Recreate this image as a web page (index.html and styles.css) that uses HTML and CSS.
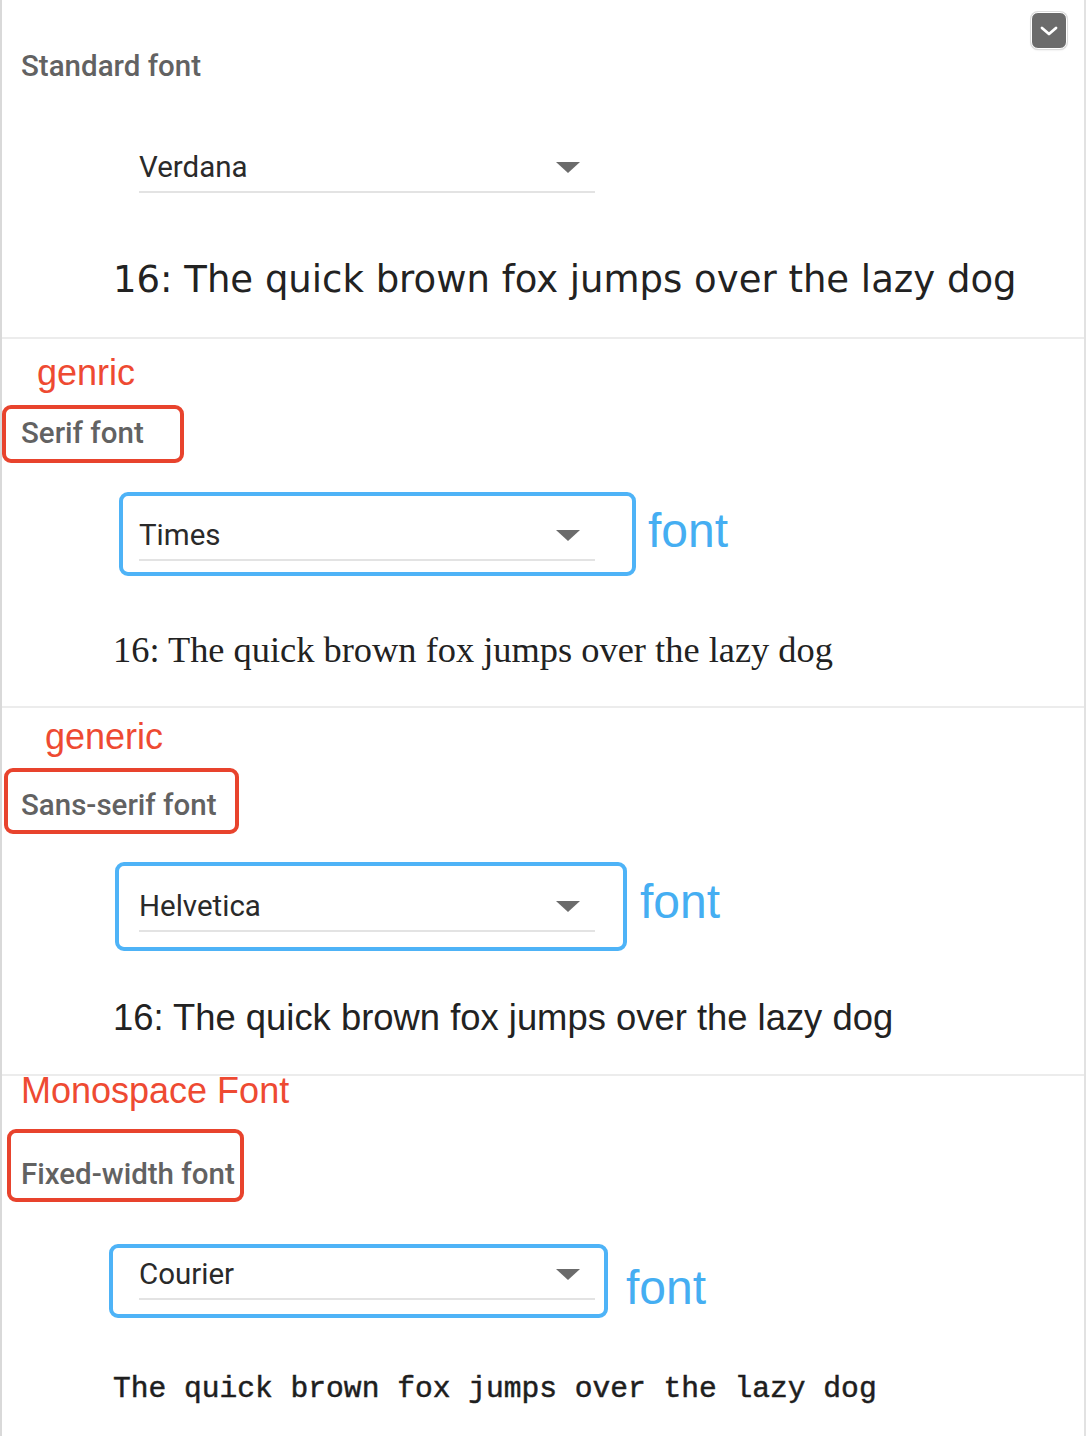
FILE: index.html
```html
<!DOCTYPE html>
<html lang="en">
<head>
<meta charset="utf-8">
<title>Font settings</title>
<link rel="stylesheet" href="styles.css">
</head>
<body>
<div class="page">
  <button class="collapse" type="button" aria-label="Collapse">
    <svg width="20" height="12" viewBox="0 0 20 12"><path d="M3 3 L10 9 L17 3" fill="none" stroke="#fff" stroke-width="2.8" stroke-linecap="round" stroke-linejoin="round"/></svg>
  </button>

  <section class="sec sec-1">
    <div class="label label-std">Standard font</div>
    <div class="select select-std"><span>Verdana</span><i class="arrow"></i></div>
    <p class="sample sample-verdana">16: The quick brown fox jumps over the lazy dog</p>
  </section>

  <section class="sec sec-2">
    <div class="note-red">genric</div>
    <div class="redbox"><div class="label">Serif font</div></div>
    <div class="selrow">
      <div class="bluebox"><div class="select"><span>Times</span><i class="arrow"></i></div></div>
      <span class="note-blue">font</span>
    </div>
    <p class="sample sample-serif">16: The quick brown fox jumps over the lazy dog</p>
  </section>

  <section class="sec sec-3">
    <div class="note-red">generic</div>
    <div class="redbox"><div class="label">Sans-serif font</div></div>
    <div class="selrow">
      <div class="bluebox"><div class="select"><span>Helvetica</span><i class="arrow"></i></div></div>
      <span class="note-blue">font</span>
    </div>
    <p class="sample sample-sans">16: The quick brown fox jumps over the lazy dog</p>
  </section>

  <section class="sec sec-4">
    <div class="note-red">Monospace Font</div>
    <div class="redbox"><div class="label">Fixed-width font</div></div>
    <div class="selrow">
      <div class="bluebox"><div class="select"><span>Courier</span><i class="arrow"></i></div></div>
      <span class="note-blue">font</span>
    </div>
    <p class="sample sample-mono">The quick brown fox jumps over the lazy dog</p>
  </section>
</div>
</body>
</html>
```
FILE: styles.css
```css
* { box-sizing: border-box; }
html, body { margin: 0; padding: 0; background: #fff; }

.page {
  position: relative;
  width: 1086px;
  height: 1436px;
  overflow: hidden;
  border-left: 2px solid #d9d9d9;
  border-right: 2px solid #e2e2e2;
  font-family: Roboto, "Liberation Sans", sans-serif;
}

.collapse {
  position: absolute;
  top: 12px;
  right: 17px;
  width: 36px;
  height: 37px;
  padding: 0;
  border: 1px solid #fff;
  border-radius: 7px;
  background: #6b6b6b;
  box-shadow: 0 0 0 1px #dcdcdc, 0 1px 2px rgba(0,0,0,0.15);
  display: flex;
  align-items: center;
  justify-content: center;
}

.sec { border-top: 2px solid #ececec; }
.sec-1 { border-top: 0; height: 337px; padding-top: 49px; }
.sec-2 { height: 369px; }
.sec-3 { height: 368px; }
.sec-4 { height: 362px; }

.label {
  font-size: 29.5px;
  font-weight: 500;
  line-height: 34px;
  color: #626262;
  white-space: nowrap;
}
.label-std { margin-left: 19px; }

.select {
  width: 456px;
  height: 43px;
  padding-bottom: 7px;
  border-bottom: 2px solid #e3e3e3;
  display: flex;
  align-items: center;
  justify-content: space-between;
  font-size: 29.5px;
  line-height: 34px;
  color: #2a2a2a;
}
.select-std { margin: 67px 0 0 137px; }

.arrow {
  width: 0;
  height: 0;
  border-left: 12px solid transparent;
  border-right: 12px solid transparent;
  border-top: 11px solid #6b6b6b;
  margin-right: 15px;
}

.sample {
  margin: 0 0 0 111px;
  line-height: 44px;
  color: #222;
  white-space: nowrap;
}
.sample-verdana { font-family: "DejaVu Sans", Verdana, sans-serif; font-size: 37px; margin-top: 65px; }
.sample-serif { font-family: "Liberation Serif", "Times New Roman", serif; font-size: 36.4px; margin-top: 51.75px; }
.sample-sans { font-family: "Liberation Sans", Arial, sans-serif; font-size: 36.4px; margin-top: 45.4px; }
.sample-mono { font-family: "Liberation Mono", "Courier New", monospace; font-size: 29.6px; color: #1e1e1e; line-height: 36px; margin-top: 53px; -webkit-text-stroke: 0.5px #1e1e1e; }

.note-red {
  font-family: "Liberation Sans", Arial, sans-serif;
  font-size: 36px;
  line-height: 40px;
  color: #ee4a32;
  white-space: nowrap;
}
.sec-2 .note-red { margin: 13.5px 0 0 35px; }
.sec-3 .note-red { margin: 8.5px 0 0 43px; }
.sec-4 .note-red { margin: 0 0 0 19px; line-height: 30px; }

.redbox {
  border: 4px solid #e8432d;
  border-radius: 9px;
}
.sec-2 .redbox { margin: 12.5px 0 0 0; width: 182px; height: 58px; padding: 7px 0 0 15px; }
.sec-3 .redbox { margin: 11.5px 0 0 2px; width: 235px; height: 66px; padding: 16px 0 0 13px; }
.sec-4 .redbox { margin: 23px 0 0 5px; width: 237px; height: 73px; padding: 24px 0 0 10px; }

.selrow { display: flex; align-items: flex-start; }

.bluebox {
  border: 4px solid #4eb3f7;
  border-radius: 9px;
}
.note-blue {
  font-family: "Liberation Sans", Arial, sans-serif;
  font-size: 48px;
  line-height: 48px;
  color: #45aef2;
}

.sec-2 .selrow { margin-top: 29px; }
.sec-2 .bluebox { margin-left: 117px; width: 517px; height: 84px; padding: 22px 0 0 16px; }
.sec-2 .note-blue { margin: 15.4px 0 0 12px; }

.sec-3 .selrow { margin-top: 28px; }
.sec-3 .bluebox { margin-left: 113px; width: 512px; height: 89px; padding: 23.4px 0 0 20px; }
.sec-3 .note-blue { margin: 16.4px 0 0 13px; }

.sec-4 .selrow { margin-top: 42px; }
.sec-4 .bluebox { margin-left: 107px; width: 499px; height: 74px; padding: 9.4px 0 0 26px; }
.sec-4 .note-blue { margin: 20.4px 0 0 18px; }
```
